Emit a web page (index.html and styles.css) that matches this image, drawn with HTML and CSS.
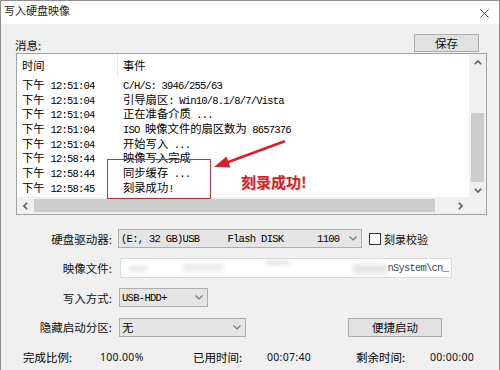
FILE: index.html
```html
<!DOCTYPE html>
<html lang="zh-CN">
<head>
    <meta charset="UTF-8">
    <title>写入硬盘映像</title>
    <link rel="stylesheet" href="styles.css">
</head>
<body>
    <div class="window">
        <div class="titlebar">
            <span class="title">写入硬盘映像</span>
            <svg class="close" viewBox="0 0 10 10"><path d="M0.5 0.5L9.5 9.5M9.5 0.5L0.5 9.5"/></svg>
        </div>

        <div class="content">
            <div class="msg-head">
                <span class="msg-label">消息:</span>
                <button class="btn save-btn">保存</button>
            </div>

            <div class="listbox">
                <div class="list-view">
                    <div class="list-header">
                        <div class="c-time">时间</div>
                        <div class="c-evt">事件</div>
                    </div>
                    <div class="row"><div class="c-time">下午<span class="m t">12:51:04</span></div><div class="c-evt"><span class="m">C/H/S: 3946/255/63</span></div></div>
                    <div class="row"><div class="c-time">下午<span class="m t">12:51:04</span></div><div class="c-evt">引导扇区<span class="m">: Win10/8.1/8/7/Vista</span></div></div>
                    <div class="row"><div class="c-time">下午<span class="m t">12:51:04</span></div><div class="c-evt">正在准备介质<span class="m"> ...</span></div></div>
                    <div class="row"><div class="c-time">下午<span class="m t">12:51:04</span></div><div class="c-evt"><span class="m">ISO </span>映像文件的扇区数为<span class="m"> 8657376</span></div></div>
                    <div class="row"><div class="c-time">下午<span class="m t">12:51:04</span></div><div class="c-evt">开始写入<span class="m"> ...</span></div></div>
                    <div class="row"><div class="c-time">下午<span class="m t">12:58:44</span></div><div class="c-evt">映像写入完成</div></div>
                    <div class="row"><div class="c-time">下午<span class="m t">12:58:44</span></div><div class="c-evt">同步缓存<span class="m"> ...</span></div></div>
                    <div class="row"><div class="c-time">下午<span class="m t">12:58:45</span></div><div class="c-evt">刻录成功<span class="m">!</span></div></div>
                </div>

                <div class="vscroll">
                    <div class="sb-btn"><svg viewBox="0 0 8 5"><polyline points="0.8,4.2 4,1 7.2,4.2"/></svg></div>
                    <div class="v-track"><div class="v-thumb"></div></div>
                    <div class="sb-btn"><svg viewBox="0 0 8 5"><polyline points="0.8,0.8 4,4 7.2,0.8"/></svg></div>
                </div>
                <div class="hscroll">
                    <div class="sb-btn"><svg class="side" viewBox="0 0 5 8"><polyline points="4.2,0.8 1,4 4.2,7.2"/></svg></div>
                    <div class="h-track"><div class="h-thumb"></div></div>
                    <div class="sb-btn"><svg class="side" viewBox="0 0 5 8"><polyline points="0.8,0.8 4,4 0.8,7.2"/></svg></div>
                </div>
                <div class="corner"></div>

                <!-- annotation drawn over the screenshot -->
                <div class="mark-box"></div>
                <svg class="mark-arrow" viewBox="0 0 469 160">
                    <line x1="267" y1="87.5" x2="210" y2="108.5"/>
                    <polygon points="197,113 213.5,113.5 209.5,102.5"/>
                </svg>
                <div class="mark-note">刻录成功!</div>
            </div>

            <div class="form">
                <div class="form-row">
                    <label class="f-label">硬盘驱动器:</label>
                    <div class="select drive-select">
                        <span class="m sel-text">(E:, 32 GB)USB     Flash DISK      1100</span>
                        <svg class="chev" viewBox="0 0 8 5"><polyline points="0.5,0.5 4,4 7.5,0.5"/></svg>
                    </div>
                    <span class="checkbox"></span>
                    <span class="check-label">刻录校验</span>
                </div>
                <div class="form-row">
                    <label class="f-label">映像文件:</label>
                    <div class="input file-input">
                        <span class="blur b1"></span>
                        <span class="blur b2"></span>
                        <span class="blur b3"></span>
                        <span class="blur b4"></span>
                        <span class="m path-end">nSystem\cn_</span>
                    </div>
                </div>
                <div class="form-row">
                    <label class="f-label">写入方式:</label>
                    <div class="select mode-select">
                        <span class="m sel-text">USB-HDD+</span>
                        <svg class="chev" viewBox="0 0 8 5"><polyline points="0.5,0.5 4,4 7.5,0.5"/></svg>
                    </div>
                </div>
                <div class="form-row">
                    <label class="f-label">隐藏启动分区:</label>
                    <div class="select hide-select">
                        <span class="sel-cn">无</span>
                        <svg class="chev" viewBox="0 0 8 5"><polyline points="0.5,0.5 4,4 7.5,0.5"/></svg>
                    </div>
                    <button class="btn quick-btn">便捷启动</button>
                </div>
            </div>

            <div class="stats">
                <span class="s-label">完成比例:</span>
                <span class="s-val">100.00%</span>
                <span class="s-label">已用时间:</span>
                <span class="s-val">00:07:40</span>
                <span class="s-label">剩余时间:</span>
                <span class="s-val">00:00:00</span>
            </div>
        </div>
    </div>
</body>
</html>
```

FILE: styles.css
```css
* {
    box-sizing: border-box;
}

body {
    margin: 0;
    background: #f0f0f0;
    font-family: "Noto Sans CJK SC", "Noto Sans", sans-serif;
    font-size: 11.5px;
    color: #0e0e0e;
}

.window {
    width: 500px;
    height: 370px;
    border: 1px solid #8e8e8e;
    border-bottom: none;
    background: #f0f0f0;
    overflow: hidden;
}

.titlebar {
    height: 23px;
    background: #fff;
    display: flex;
    justify-content: space-between;
    align-items: flex-start;
    padding: 0 10px 0 3px;
}

.title {
    font-size: 11px;
    line-height: 16px;
    margin-top: 1px;
    color: #222;
}

.close {
    width: 9px;
    height: 9px;
    margin-top: 8px;
    fill: none;
    stroke: #3a3a3a;
    stroke-width: 1;
}

.content {
    padding: 10px 11px 0 14px;
}

.msg-head {
    height: 18px;
    display: flex;
    justify-content: space-between;
    align-items: flex-start;
}

.msg-label {
    line-height: 16px;
    padding-top: 3px;
}

.btn {
    font-family: "Noto Sans CJK SC", sans-serif;
    font-size: 11.5px;
    color: #0e0e0e;
    background: #e1e1e1;
    border: 1px solid #adadad;
    padding: 0;
    line-height: 16px;
}

.save-btn {
    width: 65px;
    height: 18px;
    margin-right: 9px;
}

/* message list */
.listbox {
    position: relative;
    width: 471px;
    height: 162px;
    margin: 1px 0 0 1px;
    border: 1px solid #a3a3a3;
    background: #fff;
    display: grid;
    grid-template-columns: 452px 17px;
    grid-template-rows: 143px 17px;
    overflow: hidden;
}

.list-view {
    overflow: hidden;
    background: #fff;
    color: #000;
}

.list-header,
.row {
    display: flex;
    font-size: 11.3px;
    white-space: pre;
}

.list-header {
    height: 23px;
    line-height: 23px;
}

.list-header .c-time {
    border-right: 1px solid #e8e8e8;
}

.row {
    height: 14.7px;
    line-height: 14.7px;
}

.c-time {
    width: 101px;
    padding-left: 5px;
}

.c-evt {
    padding-left: 5px;
}

.m {
    font-family: "Liberation Mono", monospace;
    font-size: 10.5px;
    letter-spacing: -0.8px;
}

.t {
    margin-left: 6px;
}

.vscroll,
.hscroll,
.corner {
    background: #f0f0f0;
}

.vscroll {
    display: flex;
    flex-direction: column;
}

.hscroll {
    display: flex;
}

.sb-btn {
    width: 17px;
    height: 17px;
    flex: none;
    display: flex;
    align-items: center;
    justify-content: center;
}

.sb-btn svg {
    width: 8px;
    height: 5px;
    fill: none;
    stroke: #5a5a5a;
    stroke-width: 1.6;
}

.sb-btn svg.side {
    width: 5px;
    height: 8px;
}

.v-track {
    flex: 1;
    padding: 0 2px;
}

.v-thumb {
    margin-top: 42px;
    height: 69px;
    background: #cdcdcd;
}

.h-track {
    flex: 1;
    padding: 2px 0;
}

.h-thumb {
    width: 401px;
    height: 13px;
    background: #cdcdcd;
}

.mark-box {
    position: absolute;
    left: 90px;
    top: 105px;
    width: 104px;
    height: 40px;
    border: 1.5px solid #b5363c;
}

.mark-arrow {
    position: absolute;
    left: 0;
    top: 0;
    width: 469px;
    height: 160px;
    pointer-events: none;
}

.mark-arrow line {
    stroke: #d2232b;
    stroke-width: 2.6;
    stroke-linecap: round;
}

.mark-arrow polygon {
    fill: #d2232b;
}

.mark-note {
    position: absolute;
    left: 224px;
    top: 119px;
    font-size: 15px;
    line-height: 18px;
    font-weight: bold;
    color: #c9262d;
    text-shadow: 1px 1px 1px #f4c9cb, -1px 0 1px #fff;
}

/* settings form */
.form {
    margin-top: 14px;
    display: flex;
    flex-direction: column;
    gap: 10.5px;
}

.form-row {
    height: 19px;
    display: flex;
    align-items: center;
}

.f-label {
    width: 97px;
    text-align: right;
    line-height: 16px;
    flex: none;
}

.select {
    height: 19px;
    margin-left: 6px;
    background: #e5e5e5;
    border: 1px solid #adadad;
    display: flex;
    align-items: center;
    justify-content: space-between;
    padding: 0 4px 0 2px;
    white-space: pre;
    color: #000;
}

.sel-text {
    font-size: 10.5px;
    letter-spacing: -0.7px;
}

.sel-cn {
    font-size: 11.5px;
}

.chev {
    width: 8px;
    height: 5px;
    fill: none;
    stroke: #707070;
    stroke-width: 1.1;
}

.drive-select { width: 244px; }
.mode-select { width: 89px; margin-left: 7px; }
.hide-select { width: 127px; margin-left: 7px; }

.checkbox {
    width: 12px;
    height: 12px;
    margin-left: 7px;
    border: 1px solid #333;
    background: #fff;
}

.check-label {
    margin-left: 3px;
    font-size: 11px;
}

.input {
    margin-left: 8px;
    width: 332px;
    height: 20px;
    background: #fff;
    border: 1px solid #dadada;
    position: relative;
    overflow: hidden;
    display: flex;
    align-items: center;
    justify-content: flex-end;
    padding-right: 3px;
}

.blur {
    position: absolute;
    background: #d4d4d4;
    filter: blur(2px);
}

.b1 { left: 8px; top: 6px; width: 18px; height: 7px; opacity: 0.5; }
.b2 { left: 62px; top: 4px; width: 40px; height: 9px; opacity: 0.4; }
.b3 { left: 145px; top: 2px; width: 24px; height: 3px; }
.b4 { left: 232px; top: 5px; width: 34px; height: 10px; opacity: 0.6; }

.path-end {
    color: #4a4a4a;
}

.quick-btn {
    width: 94px;
    height: 19px;
    margin-left: 102px;
}

/* progress line */
.stats {
    margin-top: 12.5px;
    padding-left: 8px;
    display: grid;
    grid-template-columns: 77px 93px 74px 89px 74px auto;
    line-height: 16px;
}

.s-label {
    color: #000;
}

.s-val {
    font-family: "Noto Sans", sans-serif;
    font-size: 10.5px;
    letter-spacing: 0.3px;
}
```
